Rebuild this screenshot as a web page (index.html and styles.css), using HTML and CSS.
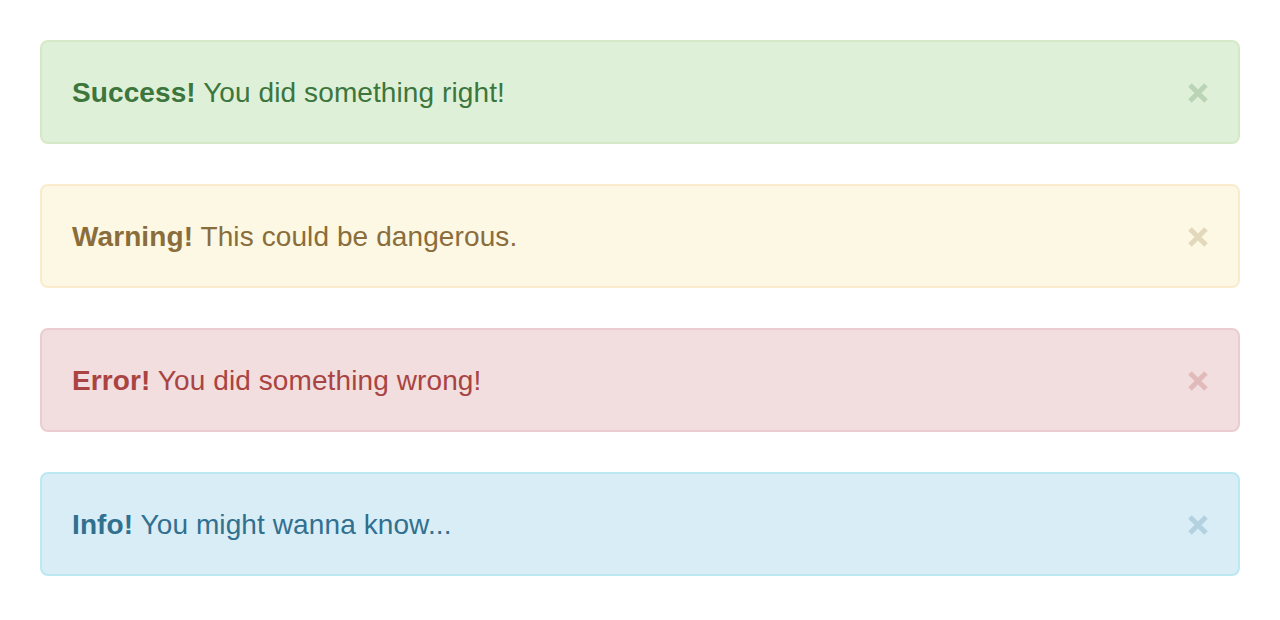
FILE: index.html
```html
<!DOCTYPE html>
<html>
<head>
<meta charset="utf-8">
<link rel="stylesheet" href="styles.css">
</head>
<body>
<div class="stack">
  <div class="alert alert-success">
    <p class="msg"><strong>Success!</strong> You did something right!</p>
    <button class="close" aria-label="Close"><svg viewBox="0 0 20 20" width="20" height="20"><path d="M2 2L18 18M18 2L2 18"/></svg></button>
  </div>
  <div class="alert alert-warning">
    <p class="msg"><strong>Warning!</strong> This could be dangerous.</p>
    <button class="close" aria-label="Close"><svg viewBox="0 0 20 20" width="20" height="20"><path d="M2 2L18 18M18 2L2 18"/></svg></button>
  </div>
  <div class="alert alert-danger">
    <p class="msg"><strong>Error!</strong> You did something wrong!</p>
    <button class="close" aria-label="Close"><svg viewBox="0 0 20 20" width="20" height="20"><path d="M2 2L18 18M18 2L2 18"/></svg></button>
  </div>
  <div class="alert alert-info">
    <p class="msg"><strong>Info!</strong> You might wanna know...</p>
    <button class="close" aria-label="Close"><svg viewBox="0 0 20 20" width="20" height="20"><path d="M2 2L18 18M18 2L2 18"/></svg></button>
  </div>
</div>
</body>
</html>
```
FILE: styles.css
```css
html, body {
  margin: 0;
  padding: 0;
  background: #ffffff;
}
body {
  font-family: "Liberation Sans", Arial, sans-serif;
}
.stack {
  display: flex;
  flex-direction: column;
  gap: 40px;
  padding: 40px;
}
.alert {
  display: flex;
  align-items: center;
  justify-content: space-between;
  border: 2px solid;
  border-radius: 8px;
  padding: 30px;
}
.msg {
  margin: 1px 0 -1px;
  font-size: 28px;
  line-height: 40px;
  letter-spacing: 0.1px;
}
.msg strong {
  font-weight: bold;
}
.close {
  border: 0;
  background: none;
  padding: 0;
  margin: 1px 0 -1px;
  width: 20px;
  height: 20px;
  color: inherit;
  opacity: 0.22;
  display: flex;
}
.close svg path {
  stroke: currentColor;
  stroke-width: 5;
  fill: none;
}
.alert-success { background: #dff0d8; border-color: #d6e9c6; color: #3c763d; }
.alert-warning { background: #fcf8e3; border-color: #faebcc; color: #8a6d3b; }
.alert-danger  { background: #f2dede; border-color: #ebccd1; color: #a94442; }
.alert-info    { background: #d9edf7; border-color: #bce8f1; color: #31708f; }
```
